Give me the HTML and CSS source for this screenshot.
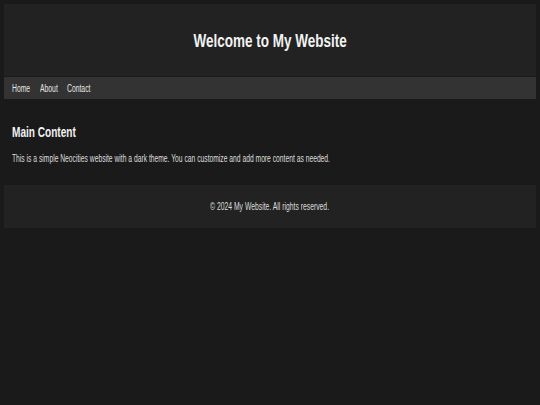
FILE: index.html
```html
<!DOCTYPE html>
<html>
<head>
<meta charset="utf-8">
<link rel="stylesheet" href="styles.css">
</head>
<body>
<header class="site-header"><h1 class="title">Welcome to My Website</h1></header>
<nav class="site-nav">
  <a href="#" class="nav-link">Home</a>
  <a href="#" class="nav-link">About</a>
  <a href="#" class="nav-link">Contact</a>
</nav>
<main class="main">
  <h2 class="main-title">Main Content</h2>
  <p class="main-text">This is a simple Neocities website with a dark theme. You can customize and add more content as needed.</p>
</main>
<footer class="site-footer"><p class="footer-text">© 2024 My Website. All rights reserved.</p></footer>
</body>
</html>
```

FILE: styles.css
```css
html, body {
  background: #1a1a1a;
}
body {
  margin: 0;
  padding: 4px;
  color: #e6e6e6;
  font-family: "Liberation Sans", Arial, sans-serif;
}
.site-header {
  background: #222222;
  height: 72px;
  display: flex;
  align-items: center;
  justify-content: center;
}
.title {
  margin: 2px 0 0;
  font-size: 18px;
  line-height: 22px;
  font-weight: bold;
  color: #f2f2f2;
  white-space: nowrap;
  transform: scaleX(0.75);
}
.site-nav {
  background: #333333;
  height: 22px;
  margin-top: 1px;
  display: flex;
  align-items: center;
  padding: 0 8px;
}
.nav-link {
  display: inline-block;
  color: #e6e6e6;
  text-decoration: none;
  font-size: 10px;
  white-space: nowrap;
  transform: scaleX(0.68);
  transform-origin: left center;
}
.nav-link + .nav-link {
  margin-left: -0.5px;
}
.nav-link:nth-child(1) { width: 28px; }
.nav-link:nth-child(2) { width: 28px; }
.main {
  padding: 25px 8px 20px;
}
.main-title {
  margin: 0 0 13px;
  font-size: 14px;
  line-height: 16px;
  font-weight: bold;
  color: #f2f2f2;
  white-space: nowrap;
  transform: scaleX(0.72);
  transform-origin: left center;
}
.main-text {
  margin: 0;
  font-size: 10px;
  line-height: 12px;
  color: #dddddd;
  white-space: nowrap;
  transform: scaleX(0.673);
  transform-origin: left center;
}
.site-footer {
  background: #222222;
  height: 43px;
  display: flex;
  align-items: center;
  justify-content: center;
}
.footer-text {
  margin: 0;
  font-size: 10px;
  line-height: 12px;
  color: #dddddd;
  white-space: nowrap;
  transform: scaleX(0.68);
}
```
